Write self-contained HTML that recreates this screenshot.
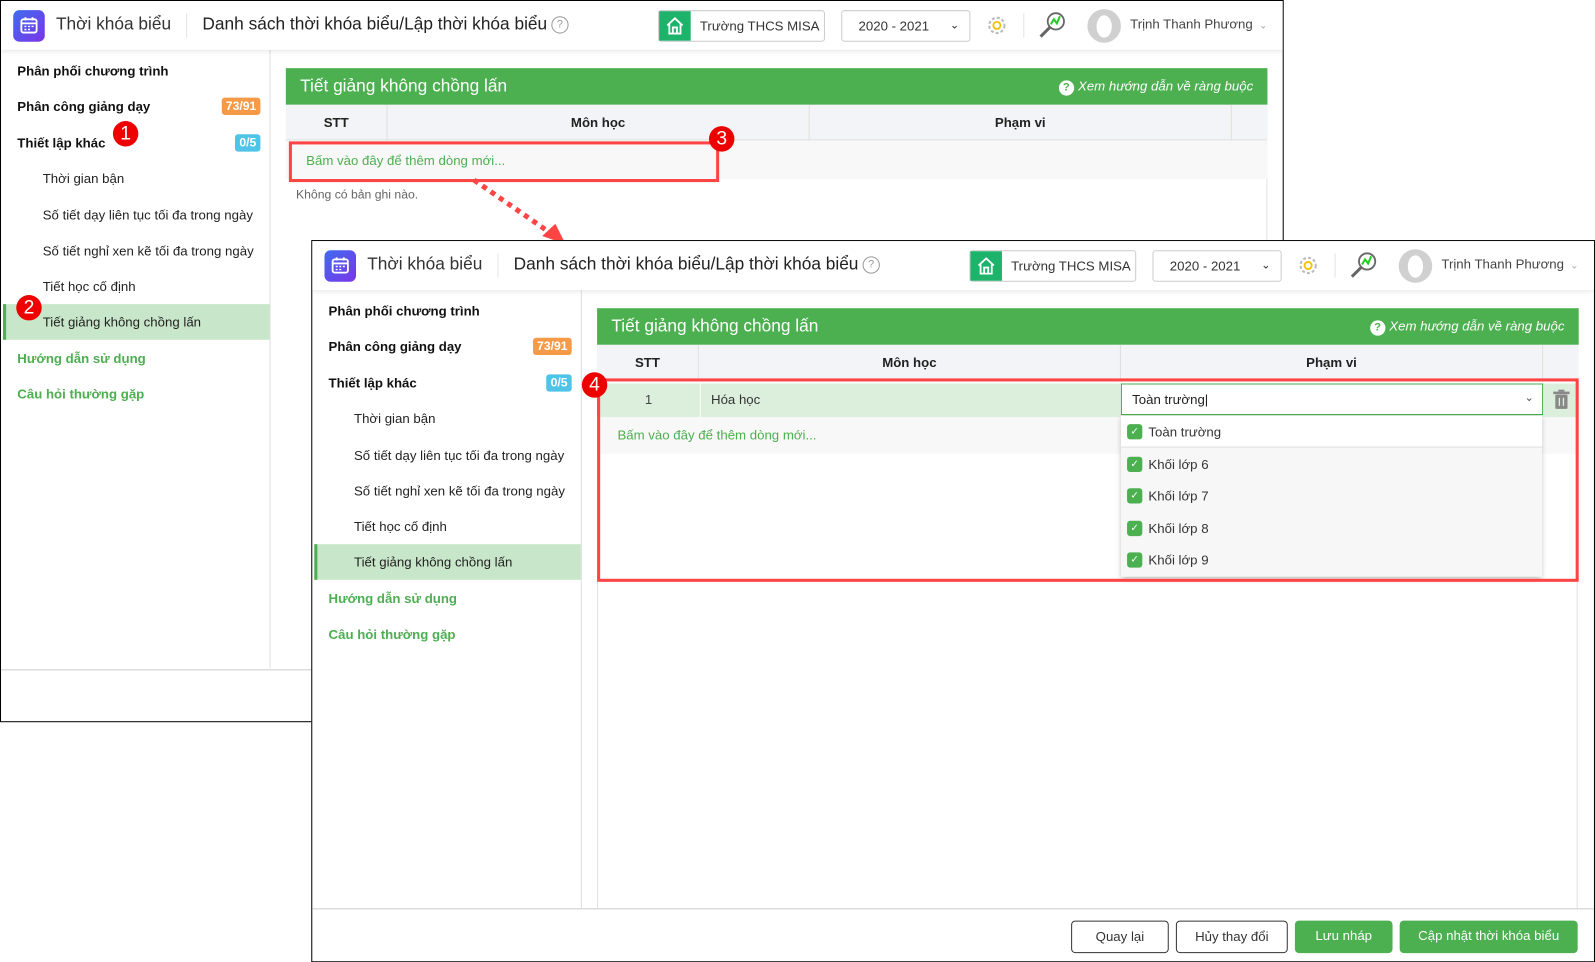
<!DOCTYPE html>
<html><head><meta charset="utf-8">
<style>
*{box-sizing:border-box;margin:0;padding:0}
html,body{width:1595px;height:962px;overflow:hidden;background:#fff;font-family:"Liberation Sans","DejaVu Sans",sans-serif;color:#212121}
#wrap{position:absolute;left:0;top:0;width:1568px;height:946px;transform:scale(1.0172);transform-origin:0 0}
.win{position:absolute;width:1262px;height:710px;border:1px solid #000;background:#fff;overflow:hidden}
.hdr{position:absolute;left:0;top:0;right:0;height:48px;background:#fff;box-shadow:0 2px 4px rgba(0,0,0,.08);z-index:2}
.logo{position:absolute;left:12px;top:9px;width:31px;height:31px;border-radius:6px;background:linear-gradient(135deg,#3d6cf0,#7b35e8)}
.t1{position:absolute;left:54px;top:13px;font-size:17px;color:#333}
.sep{position:absolute;left:182px;top:12px;width:1px;height:24px;background:#e3e3e3}
.t2{position:absolute;left:198px;top:13px;font-size:17px;color:#222}
.q{display:inline-block;width:17px;height:17px;border:1.5px solid #999;border-radius:50%;font-size:11px;color:#999;text-align:center;line-height:14px;vertical-align:2px;margin-left:4px}
.school{position:absolute;left:646px;top:9px;width:164px;height:31px;border:1px solid #ccc;border-radius:3px;font-size:13px;color:#333}
.school .hi{position:absolute;left:0;top:0;width:31px;height:29px;background:#1db36b}
.school span{position:absolute;left:40px;top:7px}
.year{position:absolute;left:826px;top:9px;width:127px;height:31px;border:1px solid #ccc;border-radius:3px;font-size:13px;color:#333}
.year span{position:absolute;left:16px;top:7px}
.year i{position:absolute;right:10px;top:7px;font-style:normal;font-size:11px}
.gear{position:absolute;left:968px;top:13px}
.sep2{position:absolute;left:1005px;top:12px;width:1px;height:24px;background:#e3e3e3}
.mag{position:absolute;left:1019px;top:9px}
.av{position:absolute;left:1068px;top:8px;width:33px;height:33px;border-radius:50%;background:#d0d0d0}
.av:after{content:"";position:absolute;left:9px;top:6px;width:15px;height:22px;border-radius:50%;background:#fff}
.user{position:absolute;left:1110px;top:15px;font-size:13px;color:#444}
.user i{font-style:normal;color:#aaa;margin-left:6px;font-size:10px}
.side{position:absolute;left:2px;top:48px;width:263px;bottom:52px;border-right:1px solid #ddd;font-size:13px}
.side div{position:absolute;left:0;right:0;height:35px;line-height:35px;padding-left:14px}
.side .b{font-weight:bold;color:#111}
.side .s{padding-left:39px;color:#222}
.side .g{font-weight:bold;color:#4caf50}
.side .act{background:#c8e6c9;border-left:3px solid #4caf50;padding-left:36px}
.bdg{position:absolute;right:9px;top:9px;height:17px;line-height:17px;padding:0 4px;border-radius:3px;color:#fff;font-size:12px;font-weight:bold}
.hline{position:absolute;left:0;right:0;height:1px;background:#ccc}
.main{position:absolute;left:280px;top:66px;width:965px}
.gbar{height:36px;background:#4caf50;color:#fff;position:relative}
.gbar .tt{position:absolute;left:14px;top:8px;font-size:17px}
.gbar .hp{position:absolute;right:14px;top:10px;font-size:13px;font-style:italic}
.gbar .hp b{display:inline-block;width:15px;height:15px;border-radius:50%;background:#fff;color:#4caf50;font-size:11px;text-align:center;line-height:15px;font-style:normal;margin-right:4px}
.th{height:35px;background:#f3f4f7;border-bottom:1px solid #e0e0e0;position:relative;font-size:13px;font-weight:bold;color:#222}
.th div{position:absolute;top:0;height:35px;line-height:35px;text-align:center;border-right:1px solid #e0e0e0}
.red{position:absolute;border:3px solid #f44;}
.num{position:absolute;width:25px;height:25px;border-radius:50%;background:#e00;color:#fff;font-size:19px;text-align:center;line-height:25px}
.add{color:#4caf50;font-size:13px}
.dd div{display:flex;align-items:center;padding-left:6px}
.ck{display:inline-block;width:15px;height:15px;background:#4caf50;border-radius:3px;color:#fff;font-size:10px;text-align:center;line-height:15px;margin-right:6px}
.btn{position:absolute;top:-2px;height:32px;line-height:30px;border-radius:4px;font-size:13px;text-align:center}
</style></head><body><div id="wrap">

<!-- WINDOW 1 -->
<div class="win" style="left:0;top:0">
 <div class="hdr">
  <div class="logo"><svg width="31" height="31" viewBox="0 0 31 31"><rect x="8" y="9" width="15" height="13" rx="2" fill="none" stroke="#fff" stroke-width="1.8"/><line x1="8" y1="13" x2="23" y2="13" stroke="#fff" stroke-width="1.8"/><line x1="12" y1="7" x2="12" y2="10" stroke="#fff" stroke-width="1.8"/><line x1="19" y1="7" x2="19" y2="10" stroke="#fff" stroke-width="1.8"/><path d="M11 16h2M14.5 16h2M18 16h2M11 19h2M14.5 19h2" stroke="#fff" stroke-width="1.4"/></svg></div>
  <div class="t1">Thời khóa biểu</div><div class="sep"></div>
  <div class="t2">Danh sách thời khóa biểu/Lập thời khóa biểu<span class="q">?</span></div>
  <div class="school"><div class="hi"><svg width="31" height="29"><path d="M8 14 L15.5 7 L23 14 M10 13 V22 H21 V13 M13.5 22 V16 H17.5 V22" fill="none" stroke="#fff" stroke-width="1.8"/></svg></div><span>Trường THCS MISA</span></div>
  <div class="year"><span>2020 - 2021</span><i>&#8964;</i></div>
  <svg class="gear" width="22" height="22" viewBox="0 0 22 22"><circle cx="11" cy="11" r="7.5" fill="none" stroke="#bbb" stroke-width="2" stroke-dasharray="3 2"/><circle cx="11" cy="11" r="3.5" fill="none" stroke="#f5c000" stroke-width="1.8"/></svg>
  <div class="sep2"></div>
  <svg class="mag" width="30" height="30"><circle cx="18" cy="11" r="8" fill="none" stroke="#666" stroke-width="1.8"/><path d="M12 17 L3 26" stroke="#666" stroke-width="3"/><path d="M13 14 L16 9 L19 13 L22 6" fill="none" stroke="#2c2" stroke-width="2"/></svg>
  <div class="av"></div>
  <div class="user">Trịnh Thanh Phương<i>&#8964;</i></div>
 </div>
 <div class="side" style="bottom:52px">
  <div class="b" style="top:3px">Phân phối chương trình</div>
  <div class="b" style="top:38px">Phân công giảng dạy<span class="bdg" style="background:#f79a47">73/91</span></div>
  <div class="b" style="top:74px">Thiết lập khác<span class="bdg" style="background:#4fc3e8">0/5</span></div>
  <div class="s" style="top:109px">Thời gian bận</div>
  <div class="s" style="top:145px">Số tiết dạy liên tục tối đa trong ngày</div>
  <div class="s" style="top:180px">Số tiết nghỉ xen kẽ tối đa trong ngày</div>
  <div class="s" style="top:215px">Tiết học cố định</div>
  <div class="s act" style="top:250px">Tiết giảng không chồng lấn</div>
  <div class="g" style="top:286px">Hướng dẫn sử dụng</div>
  <div class="g" style="top:321px">Câu hỏi thường gặp</div>
 </div>
 <div class="hline" style="top:657px"></div>
 <div style="position:absolute;left:1244px;top:102px;width:1px;height:555px;background:#e0e0e0"></div>
 <div class="main">
  <div class="gbar"><span class="tt">Tiết giảng không chồng lấn</span><span class="hp"><b>?</b>Xem hướng dẫn về ràng buộc</span></div>
  <div class="th"><div style="left:0;width:100px">STT</div><div style="left:100px;width:415px">Môn học</div><div style="left:515px;width:415px">Phạm vi</div></div>
  <div style="height:38px;background:#f8f8f8;padding:12px 0 0 20px" class="add">Bấm vào đây để thêm dòng mới...</div>
  <div style="font-size:12px;color:#666;padding:8px 0 0 10px">Không có bản ghi nào.</div>
 </div>
 <div class="red" style="left:283px;top:138px;width:423px;height:40px"></div>
 <div class="num" style="left:110px;top:118px">1</div>
 <div class="num" style="left:15px;top:289px">2</div>
 <div class="num" style="left:696px;top:123px">3</div>
</div>

<!-- arrow -->
<svg style="position:absolute;left:0;top:0" width="600" height="250"><line x1="466" y1="177" x2="541" y2="229" stroke="#f44" stroke-width="5" stroke-dasharray="5 5"/><path d="M533 232 L556 240 L546 220 Z" fill="#f44"/></svg>

<!-- WINDOW 2 -->
<div class="win" style="left:306px;top:236px">
 <div class="hdr">
  <div class="logo"><svg width="31" height="31" viewBox="0 0 31 31"><rect x="8" y="9" width="15" height="13" rx="2" fill="none" stroke="#fff" stroke-width="1.8"/><line x1="8" y1="13" x2="23" y2="13" stroke="#fff" stroke-width="1.8"/><line x1="12" y1="7" x2="12" y2="10" stroke="#fff" stroke-width="1.8"/><line x1="19" y1="7" x2="19" y2="10" stroke="#fff" stroke-width="1.8"/><path d="M11 16h2M14.5 16h2M18 16h2M11 19h2M14.5 19h2" stroke="#fff" stroke-width="1.4"/></svg></div>
  <div class="t1">Thời khóa biểu</div><div class="sep"></div>
  <div class="t2">Danh sách thời khóa biểu/Lập thời khóa biểu<span class="q">?</span></div>
  <div class="school"><div class="hi"><svg width="31" height="29"><path d="M8 14 L15.5 7 L23 14 M10 13 V22 H21 V13 M13.5 22 V16 H17.5 V22" fill="none" stroke="#fff" stroke-width="1.8"/></svg></div><span>Trường THCS MISA</span></div>
  <div class="year"><span>2020 - 2021</span><i>&#8964;</i></div>
  <svg class="gear" width="22" height="22" viewBox="0 0 22 22"><circle cx="11" cy="11" r="7.5" fill="none" stroke="#bbb" stroke-width="2" stroke-dasharray="3 2"/><circle cx="11" cy="11" r="3.5" fill="none" stroke="#f5c000" stroke-width="1.8"/></svg>
  <div class="sep2"></div>
  <svg class="mag" width="30" height="30"><circle cx="18" cy="11" r="8" fill="none" stroke="#666" stroke-width="1.8"/><path d="M12 17 L3 26" stroke="#666" stroke-width="3"/><path d="M13 14 L16 9 L19 13 L22 6" fill="none" stroke="#2c2" stroke-width="2"/></svg>
  <div class="av"></div>
  <div class="user">Trịnh Thanh Phương<i>&#8964;</i></div>
 </div>
 <div class="side" style="bottom:52px">
  <div class="b" style="top:3px">Phân phối chương trình</div>
  <div class="b" style="top:38px">Phân công giảng dạy<span class="bdg" style="background:#f79a47">73/91</span></div>
  <div class="b" style="top:74px">Thiết lập khác<span class="bdg" style="background:#4fc3e8">0/5</span></div>
  <div class="s" style="top:109px">Thời gian bận</div>
  <div class="s" style="top:145px">Số tiết dạy liên tục tối đa trong ngày</div>
  <div class="s" style="top:180px">Số tiết nghỉ xen kẽ tối đa trong ngày</div>
  <div class="s" style="top:215px">Tiết học cố định</div>
  <div class="s act" style="top:250px">Tiết giảng không chồng lấn</div>
  <div class="g" style="top:286px">Hướng dẫn sử dụng</div>
  <div class="g" style="top:321px">Câu hỏi thường gặp</div>
 </div>
 <div class="hline" style="top:656px"></div>
 <div style="position:absolute;left:280px;top:66px;width:1px;height:590px;background:#e0e0e0"></div>
 <div style="position:absolute;left:1243px;top:102px;width:1px;height:554px;background:#e0e0e0"></div>
 <div class="main">
  <div class="gbar"><span class="tt">Tiết giảng không chồng lấn</span><span class="hp"><b>?</b>Xem hướng dẫn về ràng buộc</span></div>
  <div class="th"><div style="left:0;width:100px">STT</div><div style="left:100px;width:415px">Môn học</div><div style="left:515px;width:415px">Phạm vi</div></div>
  <div style="position:relative;height:33px;margin-top:3px;background:#dcefdc;border-left:2px solid #4caf50;font-size:13px">
   <span style="position:absolute;left:45px;top:8px;color:#444">1</span>
   <div style="position:absolute;left:99px;top:0;width:1px;height:33px;background:#fff"></div>
   <span style="position:absolute;left:110px;top:8px;color:#333">Hóa học</span>
   <div style="position:absolute;left:513px;top:0;width:415px;height:31px;background:#fff;border:1px solid #4caf50"><span style="position:absolute;left:10px;top:7px">Toàn trường|</span><span style="position:absolute;right:8px;top:6px;color:#555;font-size:11px">&#8964;</span></div>
   <svg style="position:absolute;left:937px;top:6px" width="18" height="20"><rect x="3" y="5" width="12" height="14" rx="1" fill="#888"/><rect x="1" y="2" width="16" height="2.5" fill="#888"/><rect x="6" y="0" width="6" height="2" fill="#888"/><path d="M7 8v8M11 8v8" stroke="#dcefdc" stroke-width="1.3"/></svg>
  </div>
  <div style="height:36px;background:#f8f8f8;padding:10px 0 0 20px" class="add">Bấm vào đây để thêm dòng mới...</div>
 </div>
 <div class="dd" style="position:absolute;left:795px;top:172px;width:414px;height:158px;background:#f7f7f7;box-shadow:0 2px 5px rgba(0,0,0,.25);font-size:13px;color:#333">
  <div style="height:31px;background:#fff;border-bottom:1px solid #ddd"><span class="ck">&#10003;</span>Toàn trường</div>
  <div style="height:32px"><span class="ck">&#10003;</span>Khối lớp 6</div>
  <div style="height:31px"><span class="ck">&#10003;</span>Khối lớp 7</div>
  <div style="height:32px"><span class="ck">&#10003;</span>Khối lớp 8</div>
  <div style="height:31px"><span class="ck">&#10003;</span>Khối lớp 9</div>
 </div>
 <div class="red" style="left:280px;top:135px;width:965px;height:200px"></div>
 <div class="num" style="left:265px;top:129px">4</div>
 <div style="position:absolute;left:0;right:0;top:656px;height:53px">
  <div class="btn" style="left:746px;width:96px;border:1px solid #333;color:#333;top:12px">Quay lại</div>
  <div class="btn" style="left:849px;width:110px;border:1px solid #333;color:#333;top:12px">Hủy thay đổi</div>
  <div class="btn" style="left:966px;width:96px;background:#4caf50;color:#fff;top:12px">Lưu nháp</div>
  <div class="btn" style="left:1069px;width:175px;background:#4caf50;color:#fff;top:12px">Cập nhật thời khóa biểu</div>
 </div>
</div>

</div></body></html>
